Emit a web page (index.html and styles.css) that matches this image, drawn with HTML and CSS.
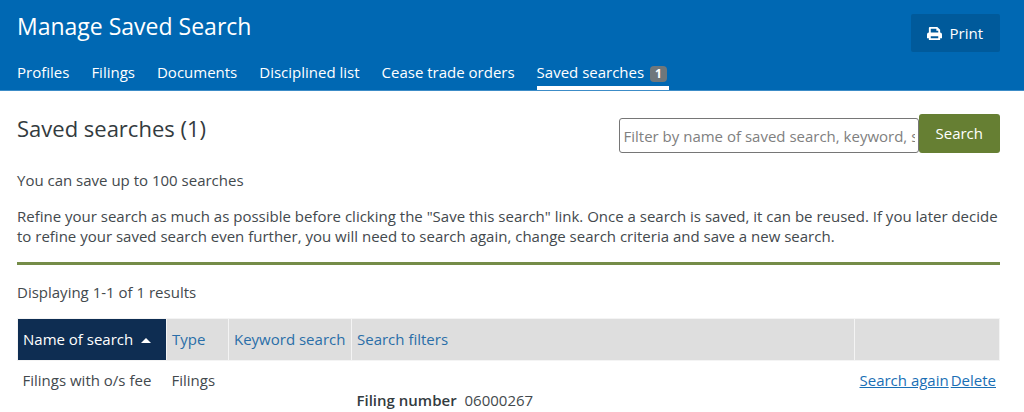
FILE: index.html
```html
<!DOCTYPE html>
<html lang="en">
<head>
    <meta charset="UTF-8">
    <meta name="viewport" content="width=device-width, initial-scale=1">
    <title>Manage Saved Search</title>
    <link rel="stylesheet" href="styles.css">
</head>
<body>
    <header class="header">
        <div class="header-top">
            <h1>Manage Saved Search</h1>
            <button type="button" class="print-button">
                <svg class="print-icon" viewBox="0 0 16 16" aria-hidden="true">
                    <path fill="#fff" fill-rule="evenodd" d="M3 1h8l3 3v3a2 2 0 0 1 2 2v4h-2v2H2v-2H0V9a2 2 0 0 1 2-2V2a1 1 0 0 1 1-1zM4 3v4h8V5h-2V3zM4 11v2h8v-2z"/>
                </svg>
                Print
            </button>
        </div>
        <nav class="tabs">
            <a href="#">Profiles</a>
            <a href="#">Filings</a>
            <a href="#">Documents</a>
            <a href="#">Disciplined list</a>
            <a href="#">Cease trade orders</a>
            <a href="#" class="active" aria-current="page">Saved searches <span class="badge">1</span></a>
        </nav>
    </header>
    <main class="content">
        <div class="content-top">
            <h2>Saved searches (1)</h2>
            <form class="filter">
                <input type="text" class="filter-input" aria-label="Filter saved searches" placeholder="Filter by name of saved search, keyword, search filters">
                <button type="submit" class="search-button">Search</button>
            </form>
        </div>
        <p>You can save up to 100 searches</p>
        <p>Refine your search as much as possible before clicking the "Save this search" link. Once a search is saved, it can be reused. If you later decide to refine your saved search even further, you will need to search again, change search criteria and save a new search.</p>
        <hr class="divider">
        <p class="count">Displaying 1-1 of 1 results</p>
        <table class="results">
            <thead>
                <tr>
                    <th class="col-name sorted" aria-sort="ascending"><a href="#">Name of search<span class="arrow"></span></a></th>
                    <th class="col-type"><a href="#">Type</a></th>
                    <th class="col-keyword"><a href="#">Keyword search</a></th>
                    <th><a href="#">Search filters</a></th>
                    <th class="col-actions"></th>
                </tr>
            </thead>
            <tbody>
                <tr>
                    <td>Filings with o/s fee</td>
                    <td>Filings</td>
                    <td></td>
                    <td class="filters"><strong>Filing number</strong> 06000267</td>
                    <td class="actions"><a href="#">Search again</a><a href="#">Delete</a></td>
                </tr>
            </tbody>
        </table>
    </main>
</body>
</html>
```

FILE: styles.css
```css
* {
    box-sizing: border-box;
}
body {
    margin: 0;
    font-family: "Open Sans", "Noto Sans", sans-serif;
    font-size: 15px;
    line-height: 20px;
    color: #43494d;
    background-color: #fff;
}
button,
input {
    font: inherit;
}
h1,
h2 {
    margin: 0;
    font-weight: normal;
}
.header {
    padding: 12px 24px 0 17px;
    background-color: #0068b3;
    border-bottom: 1px solid #3c8cc7;
    color: #fff;
}
.header-top {
    display: flex;
    justify-content: space-between;
    align-items: flex-start;
    height: 50px;
}
h1 {
    font-size: 23px;
    line-height: 28px;
}
.print-button {
    display: flex;
    align-items: center;
    gap: 8px;
    margin-top: 2px;
    padding: 9px 17px 9px 16px;
    border: none;
    border-radius: 2px;
    background-color: #005a9b;
    color: #fff;
    line-height: 20px;
    cursor: pointer;
}
.print-icon {
    width: 15px;
    height: 15px;
}
.tabs {
    display: flex;
    gap: 22px;
}
.tabs a {
    padding-bottom: 4px;
    border-bottom: 4px solid transparent;
    color: #fff;
    text-decoration: none;
}
.tabs a.active {
    border-bottom-color: #fff;
}
.badge {
    display: inline-block;
    margin: 0 2px;
    padding: 0 5px;
    border-radius: 4px;
    background-color: #6f777b;
    font-size: 12px;
    line-height: 16px;
    font-weight: bold;
}
.content {
    padding: 23px 24px 0 17px;
}
.content-top {
    display: flex;
    justify-content: space-between;
    align-items: flex-start;
    margin-bottom: 17px;
}
h2 {
    font-size: 22px;
    line-height: 28px;
    color: #333b40;
}
.filter {
    display: flex;
    align-items: flex-end;
}
.filter-input {
    width: 300px;
    height: 35px;
    padding: 0 3px 0 4px;
    border: 1px solid #767676;
    border-radius: 3px;
    color: #43494d;
}
.filter-input::placeholder {
    color: #808080;
}
.search-button {
    padding: 9px 17px 10px;
    border: none;
    border-radius: 3px;
    background-color: #667f33;
    color: #fff;
    cursor: pointer;
}
p {
    margin: 0 0 16px;
}
.divider {
    height: 3px;
    margin: 0 0 17px;
    border: none;
    background-color: #758c48;
}
.count {
    margin-bottom: 16px;
}
.results {
    width: 100%;
    border-collapse: collapse;
    table-layout: fixed;
}
.results th {
    height: 42px;
    padding: 0 5px 2px;
    border: 1px solid #f4f4f4;
    background-color: #dedede;
    background-clip: padding-box;
    font-weight: normal;
    text-align: left;
    white-space: nowrap;
}
.results th a {
    color: #2a6ea8;
    text-decoration: none;
}
.results th.sorted {
    background-color: #0e2d52;
}
.results th.sorted a {
    color: #fff;
}
.arrow {
    display: inline-block;
    margin-left: 8px;
    border: 5px solid transparent;
    border-top: none;
    border-bottom-color: #fff;
    vertical-align: 2px;
}
.col-name {
    width: 149px;
}
.col-type {
    width: 62px;
}
.col-keyword {
    width: 123px;
}
.col-actions {
    width: 145px;
}
.results td {
    padding: 9px 5px;
    vertical-align: top;
    white-space: nowrap;
}
.results td.filters {
    padding-top: 29px;
}
.filters strong {
    margin-right: 4px;
    font-weight: 600;
    color: #333b40;
}
.actions a {
    margin-right: 2px;
    color: #1a6fb5;
}
```
